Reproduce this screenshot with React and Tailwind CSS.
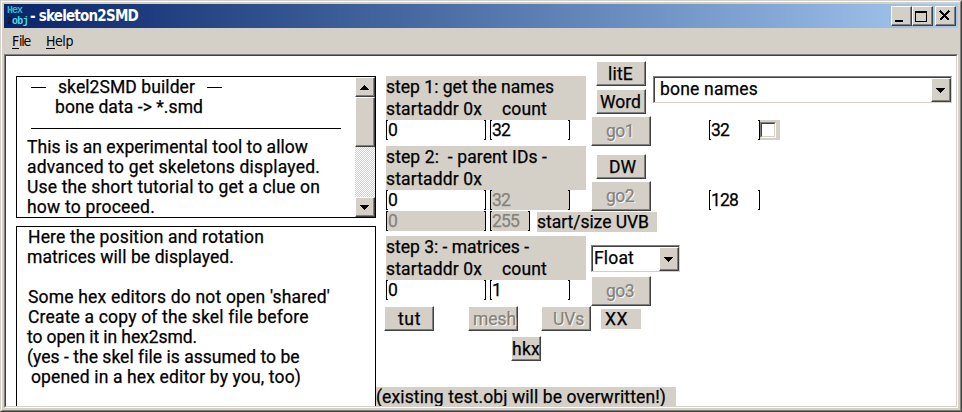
import { useLayoutEffect, useRef, useState } from "react";

// Text run whose letter spacing is adjusted so it spans exactly `w` pixels.
function Fit({ w, children, className = "" }) {
  const ref = useRef(null);
  const [spacing, setSpacing] = useState(0);
  useLayoutEffect(() => {
    const natural = ref.current.getBoundingClientRect().width;
    setSpacing((w - natural) / children.length);
  }, []);
  return (
    <span ref={ref} className={`inline-block whitespace-pre ${className}`} style={{ letterSpacing: `${spacing}px` }}>
      {children}
    </span>
  );
}

const raised =
  "bg-[#d4d0c8] border border-t-white border-l-white border-r-[#404040] border-b-[#404040] shadow-[inset_-1px_-1px_0_#808080]";

function Button({ className = "", disabled, w, children }) {
  return (
    <button
      className={`flex shrink-0 items-center overflow-hidden leading-5 ${raised} ${
        disabled ? "text-[#85827d] [text-shadow:1px_1px_0_#fff]" : "text-black"
      } ${className}`}
    >
      <Fit w={w}>{children}</Fit>
    </button>
  );
}

function Field({ className = "", disabled, w, children }) {
  return (
    <div
      className={`flex h-5 shrink-0 justify-between leading-5 ${
        disabled ? "bg-[#d4d0c8] text-[#85827d]" : "bg-white text-black"
      } ${className}`}
    >
      <span className="w-0.5 border-y border-l border-black" />
      <span className="flex-1">
        <Fit w={w}>{children}</Fit>
      </span>
      <span className="w-0.5 border-y border-r border-black" />
    </div>
  );
}

function Step({ title, w, count }) {
  return (
    <div className="h-11 w-[200px] bg-[#d4d0c8] leading-[22px]">
      <div className="h-[22px]"><Fit w={w}>{title}</Fit></div>
      <div className="flex h-[22px]">
        <Fit w={96}>startaddr 0x</Fit>
        {count && <Fit w={45} className="ml-5">count</Fit>}
      </div>
    </div>
  );
}

function Arrow({ up }) {
  return (
    <svg width="9" height="5" viewBox="0 0 9 5" shapeRendering="crispEdges">
      <path d={up ? "M4 0h1v1h1v1h1v1h1v1h1v1H0V4h1V3h1V2h1V1h1z" : "M0 0h9v1H8v1H7v1H6v1H5v1H4V4H3V3H2V2H1V1H0z"} />
    </svg>
  );
}

function Select({ className = "", w, children }) {
  return (
    <div
      className={`flex h-[27px] shrink-0 items-center border border-t-[#808080] border-l-[#808080] border-r-[#d4d0c8] border-b-[#d4d0c8] bg-white shadow-[inset_1px_1px_0_#404040] ${className}`}
    >
      <span className="flex-1"><Fit w={w}>{children}</Fit></span>
      <span className={`mt-px flex h-6 w-5 items-center justify-center pr-px ${raised}`}><Arrow /></span>
    </div>
  );
}

const line = "h-5 leading-5";

export default function App() {
  return (
    <div className="flex h-[412px] w-[962px] flex-col overflow-hidden border-t border-l border-r border-b border-t-[#d4d0c8] border-l-[#d4d0c8] border-r-[#404040] border-b-[#404040] bg-[#d4d0c8] font-['Roboto','Liberation_Sans',sans-serif] text-[17.5px] text-black [-webkit-text-stroke:0.25px]">
      <div className="flex flex-1 flex-col border border-t-white border-l-white border-r-[#808080] border-b-[#808080] p-0.5">
        {/* Title bar */}
        <div className="flex h-6 items-center bg-linear-to-r from-[#0a246a] to-[#a6caf0] pr-0.5 font-['DejaVu_Sans_Condensed','DejaVu_Sans',sans-serif] [-webkit-text-stroke:0]">
          <div className="ml-[3px] flex h-[23px] w-[22px] flex-col font-['Liberation_Mono',monospace] text-[10px] leading-[11px] font-bold">
            <Fit w={19} className="h-[11px] text-[#36b9c4]">Hex</Fit>
            <span className="flex h-[11px]">
              <Fit w={5} className="text-[#10182c]">2</Fit>
              <Fit w={16} className="text-[#50dbe4]">obj</Fit>
            </span>
          </div>
          <div className="ml-px flex-1 text-[15px] leading-5 font-bold text-white">
            <Fit w={108}>- skeleton2SMD</Fit>
          </div>
          <button className={`h-5 w-[21px] ${raised}`}>
            <svg width="19" height="18" shapeRendering="crispEdges"><path d="M3 13h8v2H3z" /></svg>
          </button>
          <button className={`h-5 w-[21px] ${raised}`}>
            <svg width="19" height="18" shapeRendering="crispEdges"><path fillRule="evenodd" d="M2 4h12v11H2zM3 6v8h10V6z" /></svg>
          </button>
          <button className={`ml-0.5 h-5 w-[21px] ${raised}`}>
            <svg width="19" height="18" shapeRendering="crispEdges"><path d="M4 4l9 9M13 4l-9 9" stroke="#000" strokeWidth="2.2" /></svg>
          </button>
        </div>
        {/* Menu bar */}
        <div className="flex h-[26px] items-center pl-2 font-['DejaVu_Sans_Condensed','DejaVu_Sans',sans-serif] text-[14px] [-webkit-text-stroke:0]">
          <span className="flex"><Fit w={7} className="underline underline-offset-2">F</Fit><Fit w={11}>ile</Fit></span>
          <span className="ml-4 flex"><Fit w={9} className="underline underline-offset-2">H</Fit><Fit w={18}>elp</Fit></span>
        </div>
        {/* Client area */}
        <div className="flex h-[354px] w-[954px] border border-t-[#808080] border-l-[#808080] border-r-white border-b-white">
          <div className="flex flex-1 overflow-hidden border border-t-[#404040] border-l-[#404040] border-r-[#d4d0c8] border-b-[#d4d0c8] bg-white">
            {/* Text panes */}
            <div className="ml-2.5 flex w-[360px] shrink-0 flex-col pt-5">
              <div className="flex h-[142px] border border-black">
                <div className="flex-1 pl-2.5">
                  <div className={`flex pl-1 ${line}`}>
                    <span className="mt-2.5 h-px w-[15px] bg-black" />
                    <Fit w={137} className="ml-3">skel2SMD builder</Fit>
                    <span className="mt-2.5 ml-3 h-px w-[15px] bg-black" />
                  </div>
                  <div className={`pl-7 ${line}`}><Fit w={148}>{"bone data -> *.smd"}</Fit></div>
                  <div className="h-5 pt-[11px] pl-1"><div className="h-px w-[310px] bg-black" /></div>
                  <div className={line}><Fit w={281}>This is an experimental tool to allow</Fit></div>
                  <div className={line}><Fit w={293}>advanced to get skeletons displayed.</Fit></div>
                  <div className={line}><Fit w={293}>Use the short tutorial to get a clue on</Fit></div>
                  <div className={line}><Fit w={128}>how to proceed.</Fit></div>
                </div>
                <div className="flex w-5 flex-col bg-[repeating-conic-gradient(#d4d0c8_0_25%,#fff_0_50%)] bg-[length:2px_2px]">
                  <div className={`flex h-5 items-center justify-center pr-px ${raised}`}><Arrow up /></div>
                  <div className={`h-[50px] ${raised}`} />
                  <div className="flex-1" />
                  <div className={`flex h-5 items-center justify-center pr-px ${raised}`}><Arrow /></div>
                </div>
              </div>
              <div className="mt-2 flex-1 border border-b-0 border-black pl-2.5">
                <div className={`pl-px ${line}`}><Fit w={236}>Here the position and rotation</Fit></div>
                <div className={line}><Fit w={207}>matrices will be displayed.</Fit></div>
                <div className={line} />
                <div className={`pl-px ${line}`}><Fit w={302}>Some hex editors do not open 'shared'</Fit></div>
                <div className={`pl-px ${line}`}><Fit w={280}>Create a copy of the skel file before</Fit></div>
                <div className={line}><Fit w={170}>to open it in hex2smd.</Fit></div>
                <div className={line}><Fit w={272}>(yes - the skel file is assumed to be</Fit></div>
                <div className={`pl-1 ${line}`}><Fit w={270}>opened in a hex editor by you, too)</Fit></div>
              </div>
            </div>

            {/* Controls */}
            <div className="flex flex-1 flex-col">
              <div className="flex h-[155px] pl-2.5">
                <div className="w-[205px] pt-5">
                  <Step title="step 1: get the names" w={168} count />
                  <div className="flex gap-1"><Field className="w-[100px]" w={9}>0</Field><Field className="w-20" w={18}>32</Field></div>
                  <div className="mt-1.5"><Step title="step 2:  - parent IDs -" w={161} /></div>
                  <div className="flex gap-1"><Field className="w-[100px]" w={9}>0</Field><Field className="w-20" w={18} disabled>32</Field></div>
                </div>
                <div className="flex w-[62px] flex-col pt-[5px]">
                  <Button className="ml-[5px] h-[25px] w-[50px] pl-[11px]" w={25}>litE</Button>
                  <Button className="mt-[3px] ml-[5px] h-[25px] w-[50px] pl-[3px]" w={41}>Word</Button>
                  <Button className="mt-0.5 h-[30px] w-[60px] pl-3.5" w={28} disabled>go1</Button>
                  <Button className="mt-2 ml-[5px] h-[25px] w-[50px] pl-3" w={27}>DW</Button>
                  <Button className="mt-0.5 h-[30px] w-[60px] pl-3.5" w={28} disabled>go2</Button>
                </div>
                <div className="pt-5">
                  <Select className="w-[299px] pl-1.5" w={98}>bone names</Select>
                  <div className="mt-[17px] ml-14 flex">
                    <Field className="w-[51px]" w={18}>32</Field>
                    <div className="h-5 w-5 bg-[#d4d0c8] pt-0.5">
                      <div className="h-4 w-4 border border-t-[#808080] border-l-[#808080] border-r-white border-b-white">
                        <div className="h-3.5 w-3.5 border border-t-[#404040] border-l-[#404040] border-r-[#d4d0c8] border-b-[#d4d0c8] bg-white" />
                      </div>
                    </div>
                  </div>
                  <Field className="mt-[50px] ml-14 w-[51px]" w={27}>128</Field>
                </div>
              </div>

              <div className="flex h-[25px] pl-2.5">
                <Field className="w-[100px]" w={9} disabled>0</Field>
                <Field className="ml-1 w-10" w={27} disabled>255</Field>
                <div className="mt-px ml-[7px] h-5 w-[120px] bg-[#d4d0c8] leading-5"><Fit w={112}>start/size UVB</Fit></div>
              </div>

              <div className="flex h-[70px] pl-2.5">
                <div className="w-[205px]">
                  <Step title="step 3: - matrices -" w={143} count />
                  <div className="flex gap-1"><Field className="w-[100px]" w={9}>0</Field><Field className="w-20" w={9}>1</Field></div>
                </div>
                <div className="pt-[9px]">
                  <Select className="w-[89px] pl-0.5" w={40}>Float</Select>
                  <Button className="mt-1 h-[30px] w-[60px] pl-3.5" w={28} disabled>go3</Button>
                </div>
              </div>

              <div className="flex h-[25px] pl-2">
                <Button className="w-[50px] pl-[13px]" w={23}>tut</Button>
                <Button className="ml-[34px] w-[50px] pl-1" w={43} disabled>mesh</Button>
                <Button className="ml-[23px] w-[50px] pl-[11px]" w={31} disabled>UVs</Button>
                <div className="mt-[3px] ml-2.5 h-5 w-10 bg-[#d4d0c8] pl-1 leading-5"><Fit w={23}>XX</Fit></div>
              </div>
              <Button className="mt-[5px] ml-[135px] h-[25px] w-[30px]" w={28}>hkx</Button>
              <div className="mt-[26px] h-[19px] w-[300px] shrink-0 overflow-hidden bg-[#d4d0c8] leading-5">
                <Fit w={290}>(existing test.obj will be overwritten!)</Fit>
              </div>
            </div>
          </div>
        </div>
      </div>
    </div>
  );
}
